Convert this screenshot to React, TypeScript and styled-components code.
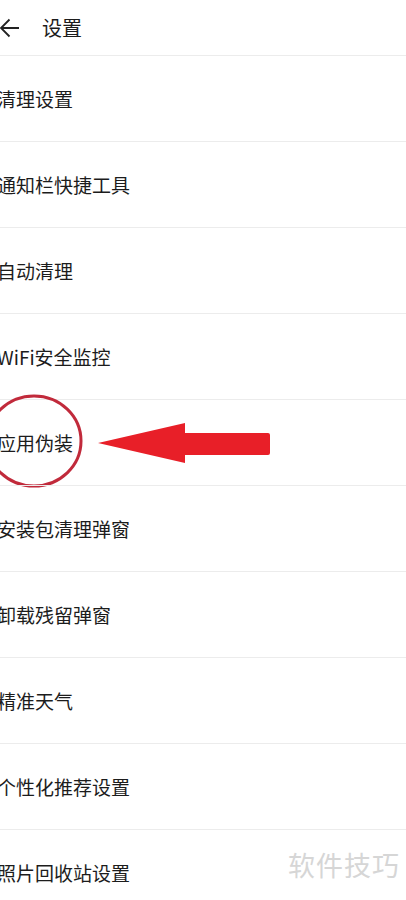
import styled, { createGlobalStyle } from "styled-components";

const GlobalStyle = createGlobalStyle`
  html, body {
    margin: 0;
    padding: 0;
    background: #ffffff;
  }
  body {
    font-family: "Noto Sans CJK SC", "Noto Sans", sans-serif;
    color: #1e1e1e;
  }
`;

const Page = styled.div`
  position: relative;
  width: 406px;
  height: 900px;
  overflow: hidden;
  background: #ffffff;
`;

const Header = styled.div`
  display: flex;
  align-items: center;
  height: 55px;
  gap: 22px;
`;

const BackIcon = styled.svg`
  width: 20px;
  height: 20px;
  flex-shrink: 0;
`;

const Title = styled.div`
  font-size: 20px;
  line-height: 1;
  color: #1c1c1c;
`;

const List = styled.div`
  display: flex;
  flex-direction: column;
`;

const Row = styled.div`
  position: relative;
  display: flex;
  align-items: center;
  height: 85px;
  border-top: 1px solid #ececec;
`;

const Label = styled.div`
  margin-left: -3px;
  font-size: 19px;
  line-height: 1;
  color: #1c1c1c;
`;

const Mark = styled.svg`
  position: absolute;
  left: 0;
  top: -10px;
  width: 406px;
  height: 105px;
  pointer-events: none;
`;

const Watermark = styled.div`
  position: absolute;
  right: 6px;
  bottom: 16px;
  font-size: 27px;
  letter-spacing: 1px;
  color: #d6d6d6;
`;

const items = [
  "清理设置",
  "通知栏快捷工具",
  "自动清理",
  "WiFi安全监控",
  "应用伪装",
  "安装包清理弹窗",
  "卸载残留弹窗",
  "精准天气",
  "个性化推荐设置",
  "照片回收站设置",
];

const App = () => {
  return (
    <Page>
      <GlobalStyle />
      <Header>
        <BackIcon viewBox="0 0 20 20">
          <path
            d="M19 10H1M9.5 1.5L1 10l8.5 8.5"
            fill="none"
            stroke="#222"
            strokeWidth="1.8"
          />
        </BackIcon>
        <Title>设置</Title>
      </Header>
      <List>
        {items.map((item, idx) => (
          <Row key={idx}>
            <Label>{item}</Label>
            {idx === 4 && (
              <Mark viewBox="0 0 406 105">
                <ellipse
                  cx="34"
                  cy="51"
                  rx="47"
                  ry="45"
                  fill="none"
                  stroke="#c12a3b"
                  strokeWidth="3"
                />
                <path
                  d="M98 53L185 33V43H268Q270 43 270 45V63Q270 65 268 65H185V73Z"
                  fill="#e81f28"
                />
              </Mark>
            )}
          </Row>
        ))}
      </List>
      <Watermark>软件技巧</Watermark>
    </Page>
  );
};

export default App;
